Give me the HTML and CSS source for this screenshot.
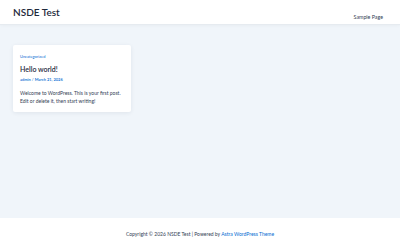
FILE: index.html
```html
<!DOCTYPE html>
<html>
<head>
<meta charset="utf-8">
<link rel="stylesheet" href="styles.css">
</head>
<body>
<div class="page">
  <header class="site-header">
    <div class="site-title">NSDE Test</div>
    <nav class="menu"><a href="#">Sample Page</a></nav>
  </header>
  <main class="content">
    <article class="card">
      <div class="cat">Uncategorized</div>
      <h2 class="title">Hello world!</h2>
      <div class="meta">admin / March 21, 2026</div>
      <p class="excerpt">Welcome to WordPress. This is your first post. Edit or delete it, then start writing!</p>
    </article>
  </main>
  <footer class="site-footer">
    <p>Copyright © 2026 NSDE Test | Powered by <a href="#">Astra WordPress Theme</a></p>
  </footer>
</div>
</body>
</html>
```
FILE: styles.css
```css
html, body {
  margin: 0;
  padding: 0;
}
body {
  font-family: Lato, "Noto Sans", sans-serif;
  color: #334155;
  background: #f0f5fa;
  width: 400px;
  height: 250px;
  overflow: hidden;
}
.page {
  display: flex;
  flex-direction: column;
  height: 250px;
}
.site-header {
  height: 24px;
  background: #fff;
  border-bottom: 1px solid #e6ebf0;
  display: flex;
  align-items: center;
  justify-content: space-between;
  padding: 0 17px 0 13px;
  box-shadow: 0 1px 3px rgba(0,0,0,0.03);
}
.site-title {
  font-size: 10px;
  font-weight: 600;
  color: #1e293b;
}
.menu a {
  font-size: 5.3px;
  color: #334155;
  text-decoration: none;
}
.content {
  flex: 1;
  padding: 20px 13px;
  display: flex;
  align-items: flex-start;
}
.card {
  width: 104px;
  background: #fff;
  padding: 9px 7px 7px 7px;
  border-radius: 2px;
  box-shadow: 0 1px 4px rgba(30, 41, 59, 0.08);
}
.cat {
  font-size: 4px;
  color: #046bd2;
  line-height: 6px;
}
.title {
  margin: 5px 0 0 0;
  font-size: 7px;
  font-weight: 600;
  color: #1e293b;
  line-height: 9px;
}
.meta {
  margin-top: 3px;
  font-size: 4px;
  font-weight: 600;
  color: #046bd2;
  line-height: 6px;
}
.excerpt {
  margin: 6px 0 0 0;
  font-size: 5px;
  line-height: 8px;
}
.site-footer {
  height: 32px;
  background: #fff;
  display: flex;
  align-items: center;
  justify-content: center;
}
.site-footer p {
  margin: 0;
  font-size: 5px;
  color: #334155;
}
.site-footer a {
  color: #046bd2;
  text-decoration: none;
}
```
